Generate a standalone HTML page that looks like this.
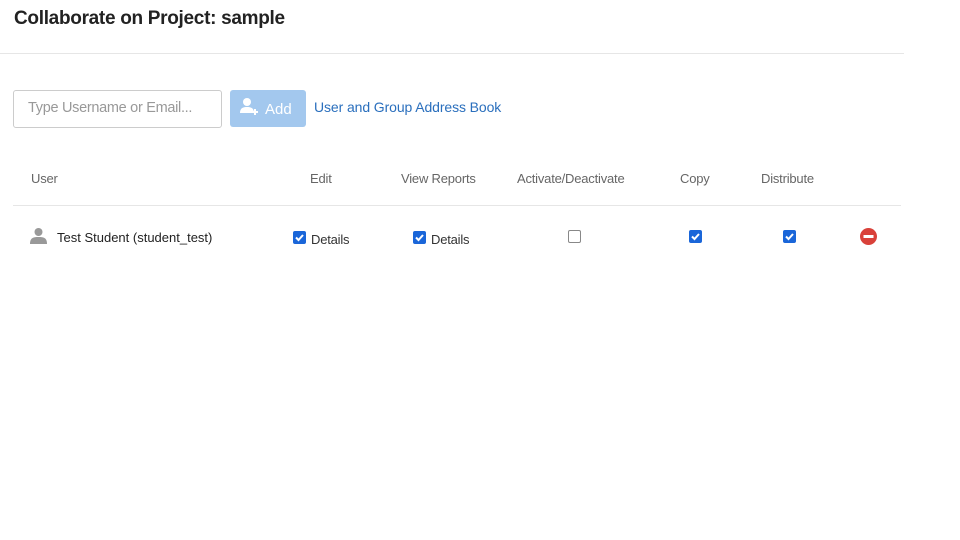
<!DOCTYPE html>
<html><head><meta charset="utf-8"><style>
body{margin:0;width:960px;height:540px;background:#fff;font-family:"Liberation Sans",sans-serif;position:relative;overflow:hidden}
.a{position:absolute;white-space:nowrap}
.cb{position:absolute;width:13px;height:13px;border-radius:2px;background:#1a66d9;box-sizing:border-box}
.cb svg{position:absolute;left:1px;top:1px}
.h{color:#666;font-size:13px;top:171px;letter-spacing:-0.2px}
</style></head><body>
<div class="a" style="left:14px;top:8px;font-size:19px;font-weight:bold;color:#222;letter-spacing:-0.3px">Collaborate on Project: sample</div>
<div class="a" style="left:0;top:53px;width:904px;height:1px;background:#e6e6e6"></div>
<div class="a" style="left:13px;top:90px;width:207px;height:36px;border:1px solid #ccc;border-radius:3px"></div>
<div class="a" style="left:28px;top:100px;font-size:14.5px;color:#999;letter-spacing:-0.3px">Type Username or Email...</div>
<div class="a" style="left:230px;top:90px;width:76px;height:37px;background:#a3c8ee;border-radius:3px"></div>
<svg class="a" style="left:239px;top:97px" width="22" height="20" viewBox="0 0 22 20"><circle cx="8" cy="5" r="4" fill="#fff"/><path d="M1 16c0-5 3-6 7-6s7 1 7 6z" fill="#fff"/><path d="M16 12v6M13 15h6" stroke="#fff" stroke-width="2"/></svg>
<div class="a" style="left:265px;top:101px;font-size:15px;color:#fff">Add</div>
<div class="a" style="left:314px;top:99px;font-size:14px;color:#2a6fbd;letter-spacing:-0.1px">User and Group Address Book</div>
<div class="a h" style="left:31px">User</div>
<div class="a h" style="left:310px">Edit</div>
<div class="a h" style="left:401px">View Reports</div>
<div class="a h" style="left:517px">Activate/Deactivate</div>
<div class="a h" style="left:680px">Copy</div>
<div class="a h" style="left:761px">Distribute</div>
<div class="a" style="left:13px;top:205px;width:888px;height:1px;background:#e6e6e6"></div>
<svg class="a" style="left:30px;top:227px" width="17" height="17" viewBox="0 0 17 17"><circle cx="8.5" cy="5" r="4" fill="#999"/><path d="M0 17c0-6 3-7 8.5-7s8.5 1 8.5 7z" fill="#999"/></svg>
<div class="a" style="left:57px;top:230px;font-size:13px;color:#222">Test Student (student_test)</div>
<div class="cb" style="left:293px;top:231px"><svg width="11" height="11"><path d="M2 5.5l2.5 2.5 4.5-5" stroke="#fff" stroke-width="2" fill="none"/></svg></div>
<div class="a" style="left:311px;top:232px;font-size:13px;color:#333;letter-spacing:-0.2px">Details</div>
<div class="cb" style="left:413px;top:231px"><svg width="11" height="11"><path d="M2 5.5l2.5 2.5 4.5-5" stroke="#fff" stroke-width="2" fill="none"/></svg></div>
<div class="a" style="left:431px;top:232px;font-size:13px;color:#333;letter-spacing:-0.2px">Details</div>
<div class="cb" style="left:568px;top:230px;background:#fff;border:1.5px solid #888"></div>
<div class="cb" style="left:689px;top:230px"><svg width="11" height="11"><path d="M2 5.5l2.5 2.5 4.5-5" stroke="#fff" stroke-width="2" fill="none"/></svg></div>
<div class="cb" style="left:783px;top:230px"><svg width="11" height="11"><path d="M2 5.5l2.5 2.5 4.5-5" stroke="#fff" stroke-width="2" fill="none"/></svg></div>
<svg class="a" style="left:860px;top:228px" width="17" height="17"><circle cx="8.5" cy="8.5" r="8.5" fill="#d9413a"/><rect x="3.5" y="7" width="10" height="3" fill="#fff"/></svg>
</body></html>
